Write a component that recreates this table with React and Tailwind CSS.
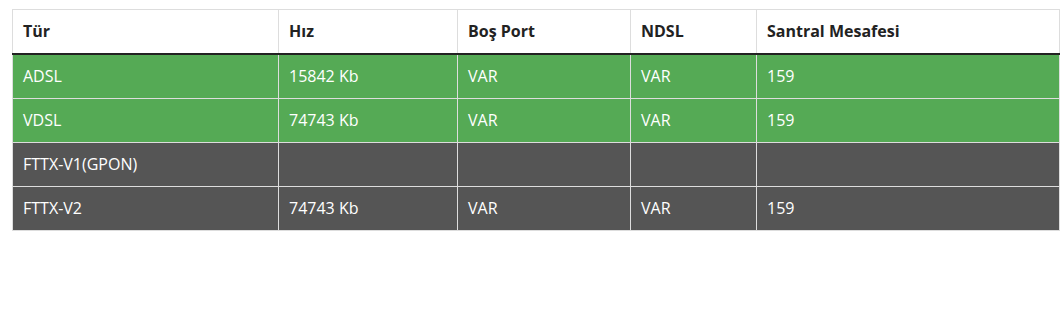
export default function App() {
  const rows = [
    { type: 'ADSL', speed: '15842 Kb', port: 'VAR', ndsl: 'VAR', dist: '159', green: true },
    { type: 'VDSL', speed: '74743 Kb', port: 'VAR', ndsl: 'VAR', dist: '159', green: true },
    { type: 'FTTX-V1(GPON)', speed: '', port: '', ndsl: '', dist: '', green: false },
    { type: 'FTTX-V2', speed: '74743 Kb', port: 'VAR', ndsl: 'VAR', dist: '159', green: false },
  ];

  return (
    <div className="min-h-screen bg-white pt-[9px] pl-[12px]" style={{ fontFamily: '"Open Sans", sans-serif' }}>
      <table className="w-[1048px] table-fixed border-collapse border border-[#dddddd] text-[16px]">
        <colgroup>
          <col className="w-[266px]" />
          <col className="w-[179px]" />
          <col className="w-[173px]" />
          <col className="w-[126px]" />
          <col />
        </colgroup>
        <thead>
          <tr className="border-b-2 border-[#222222] bg-white text-[#222222]">
            {['Tür', 'Hız', 'Boş Port', 'NDSL', 'Santral Mesafesi'].map((h) => (
              <th key={h} className="border-x border-[#dddddd] px-[10px] py-[11px] text-left font-bold leading-[21px]">
                {h}
              </th>
            ))}
          </tr>
        </thead>
        <tbody>
          {rows.map((r) => (
            <tr key={r.type} className={r.green ? 'bg-[#55aa55] text-white' : 'bg-[#555555] text-white'}>
              {[r.type, r.speed, r.port, r.ndsl, r.dist].map((c, i) => (
                <td key={i} className="border border-[#dddddd] px-[10px] py-[11px] leading-[21px]">
                  {c}
                </td>
              ))}
            </tr>
          ))}
        </tbody>
      </table>
    </div>
  );
}
